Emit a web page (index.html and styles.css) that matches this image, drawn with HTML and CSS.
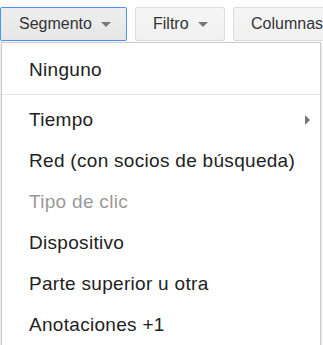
FILE: index.html
```html
<!DOCTYPE html>
<html lang="es">
<head>
    <meta charset="UTF-8">
    <title>Segmento</title>
    <link rel="stylesheet" href="styles.css">
</head>
<body>
    <div class="toolbar">
        <div class="tbutton active">Segmento <span class="caret"></span></div>
        <div class="tbutton">Filtro <span class="caret"></span></div>
        <div class="tbutton">Columnas</div>
    </div>

    <div class="menu">
        <div class="item">Ninguno</div>
        <div class="sep"></div>
        <div class="item has-sub">Tiempo <span class="sub-arrow"></span></div>
        <div class="item">Red (con socios de búsqueda)</div>
        <div class="item disabled">Tipo de clic</div>
        <div class="item">Dispositivo</div>
        <div class="item">Parte superior u otra</div>
        <div class="item">Anotaciones +1</div>
    </div>
</body>
</html>
```

FILE: styles.css
```css
body {
    margin: 0;
    font-family: "Liberation Sans", Arial, sans-serif;
    background: #fff;
    color: #222;
    overflow: hidden;
    position: relative;
    height: 345px;
}
.toolbar {
    display: flex;
    gap: 8px;
    padding-top: 7px;
    white-space: nowrap;
}
.tbutton {
    flex: none;
    height: 32px;
    line-height: 32px;
    padding: 0 16px 0 17px;
    font-size: 16px;
    color: #333;
    border: 1px solid #dcdcdc;
    border-radius: 2px;
    background: linear-gradient(#f5f5f5, #f1f1f1);
}
.tbutton.active {
    border-color: #4d90fe;
    background: linear-gradient(#eeeeee, #e6e6e6);
    padding-left: 18px;
    width: 91px;
}
.caret {
    display: inline-block;
    margin-left: 5px;
    vertical-align: middle;
    border-left: 5px solid transparent;
    border-right: 5px solid transparent;
    border-top: 5px solid #777;
}
.menu {
    position: absolute;
    left: 1px;
    top: 42px;
    width: 318px;
    height: 320px;
    background: #fff;
    border: 1px solid #ccc;
    box-shadow: 0 2px 4px rgba(0,0,0,0.2);
    padding-top: 6px;
}
.item {
    height: 41px;
    line-height: 41px;
    padding-left: 27px;
    font-size: 19px;
    letter-spacing: 0.3px;
    color: #222;
    position: relative;
}
.item.disabled {
    color: #999;
}
.sep {
    border-top: 1px solid #e5e5e5;
    margin: 4px 0;
}
.sub-arrow {
    position: absolute;
    right: 10px;
    top: 16px;
    border-top: 5px solid transparent;
    border-bottom: 5px solid transparent;
    border-left: 5px solid #777;
}
```
